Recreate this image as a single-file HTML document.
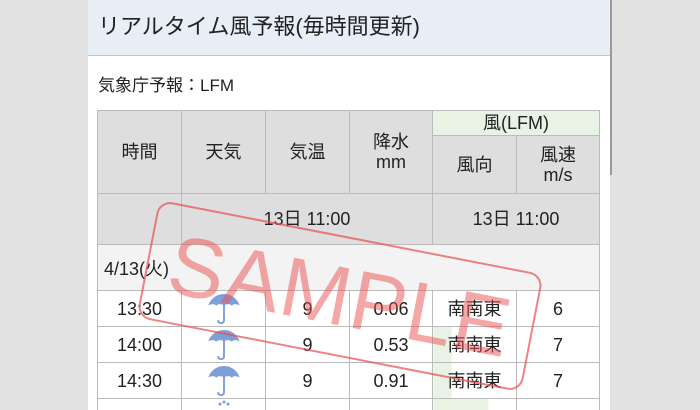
<!DOCTYPE html>
<html><head><meta charset="utf-8"><style>
*{margin:0;padding:0;box-sizing:border-box}
html,body{width:700px;height:410px;overflow:hidden}
body{background:#e2e2e2;font-family:"Liberation Sans","Noto Sans CJK JP",sans-serif;color:#222;position:relative}
.panel{position:absolute;left:88px;top:0;width:522px;height:410px;background:#fff}
.hdr{position:absolute;left:88px;top:0;width:522px;height:56px;background:#e8eef6;border-bottom:1px solid #bcc4cc;font-size:22px;line-height:54px;padding-left:10px}
.src{position:absolute;left:98px;top:71px;font-size:17px}
table{position:absolute;left:97px;top:110px;border-collapse:collapse;font-size:18px;table-layout:fixed}
td{border:1px solid #bbb;text-align:center;padding:0}
.h td{background:#dedede;line-height:20px}
.g{background:#e8f3e5 !important}
.day td{background:#f3f3f3;text-align:left;padding-left:6px}
.r td{height:36px;background:#fff;line-height:20px}
.r svg{display:block;margin:0 auto}
.last td{height:12px;border-bottom:none;background:#fff;vertical-align:top}
.sb{position:absolute;left:610px;top:0;width:2px;height:175px;background:#999}
.wm{position:absolute;left:144px;top:236px;width:392px;height:120px;border:2px solid rgba(230,80,80,.7);border-radius:14px;transform:rotate(11deg);color:rgba(235,80,80,.5);font-size:84px;line-height:116px;text-align:center;letter-spacing:1px}
</style></head><body>
<div class="panel"></div>
<div class="hdr">リアルタイム風予報(毎時間更新)</div>
<div class="sb"></div>
<div class="src">気象庁予報：LFM</div>
<table>
<colgroup><col style="width:84px"><col style="width:84px"><col style="width:84px"><col style="width:83px"><col style="width:84px"><col style="width:83px"></colgroup>
<tr class="h" style="height:25px"><td rowspan="2">時間</td><td rowspan="2">天気</td><td rowspan="2">気温</td><td rowspan="2">降水<br>mm</td><td colspan="2" class="g">風(LFM)</td></tr>
<tr class="h" style="height:58px"><td>風向</td><td>風速<br>m/s</td></tr>
<tr class="h" style="height:51px"><td></td><td colspan="3">13日 11:00</td><td colspan="2">13日 11:00</td></tr>
<tr class="day" style="height:46px"><td colspan="6">4/13(火)</td></tr>
<tr class="r"><td>13:30</td><td><svg width="34" height="33" viewBox="0 0 34 34"><path d="M17 2C8 2 2 9 1 14C4 12 7 12 9 14C11 12 15 12 17 14C19 12 23 12 25 14C27 12 30 12 33 14C32 9 26 2 17 2Z" fill="#7f9fd8"/><path d="M17 13V29Q17 32 14 32Q11 32 11 29" stroke="#7f9fd8" stroke-width="2" fill="none"/></svg></td><td>9</td><td>0.06</td><td>南南東</td><td>6</td></tr>
<tr class="r"><td>14:00</td><td><svg width="34" height="33" viewBox="0 0 34 34"><path d="M17 2C8 2 2 9 1 14C4 12 7 12 9 14C11 12 15 12 17 14C19 12 23 12 25 14C27 12 30 12 33 14C32 9 26 2 17 2Z" fill="#7f9fd8"/><path d="M17 13V29Q17 32 14 32Q11 32 11 29" stroke="#7f9fd8" stroke-width="2" fill="none"/></svg></td><td>9</td><td>0.53</td><td style="background:linear-gradient(90deg,#e8f3e5 18px,#fff 18px)">南南東</td><td>7</td></tr>
<tr class="r"><td>14:30</td><td><svg width="34" height="33" viewBox="0 0 34 34"><path d="M17 2C8 2 2 9 1 14C4 12 7 12 9 14C11 12 15 12 17 14C19 12 23 12 25 14C27 12 30 12 33 14C32 9 26 2 17 2Z" fill="#7f9fd8"/><path d="M17 13V29Q17 32 14 32Q11 32 11 29" stroke="#7f9fd8" stroke-width="2" fill="none"/></svg></td><td>9</td><td>0.91</td><td style="background:linear-gradient(90deg,#e8f3e5 18px,#fff 18px)">南南東</td><td>7</td></tr>
<tr class="last"><td></td><td><svg width="20" height="10" style="display:block;margin:0 auto"><circle cx="6" cy="5" r="1.5" fill="#7f9fd8"/><circle cx="10" cy="3" r="1.5" fill="#7f9fd8"/><circle cx="14" cy="5" r="1.5" fill="#7f9fd8"/></svg></td><td></td><td></td><td style="background:linear-gradient(90deg,#e8f3e5 55px,#fff 55px)"></td><td></td></tr>
</table>
<div class="wm">SAMPLE</div>
</body></html>
